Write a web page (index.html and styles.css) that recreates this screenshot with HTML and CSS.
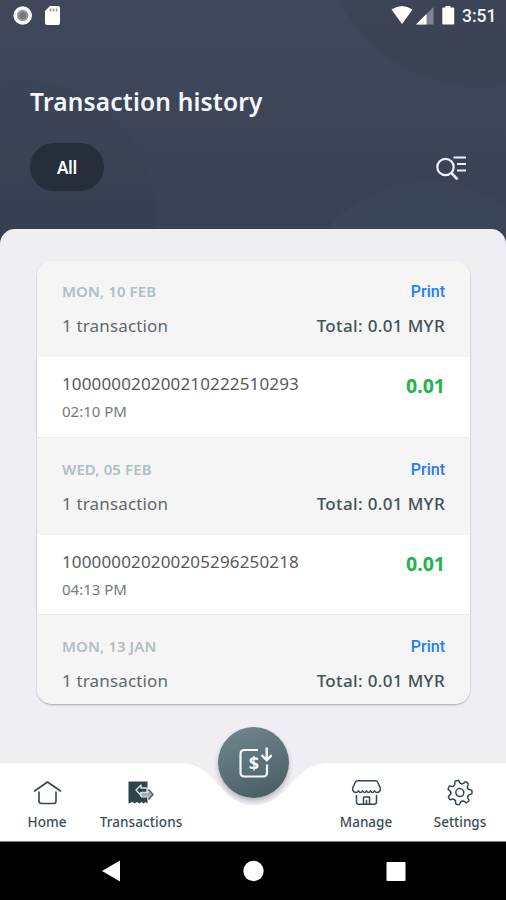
FILE: index.html
```html
<!DOCTYPE html>
<html lang="en">
<head>
    <meta charset="UTF-8">
    <meta name="viewport" content="width=device-width, initial-scale=1.0">
    <title>Transaction history</title>
    <link rel="stylesheet" href="styles.css">
</head>
<body>

    <div class="screen">
        <header class="header">
            <svg class="header-bg" viewBox="0 0 506 250">
                <circle cx="480" cy="-70" r="157" fill="#394050" opacity="0.5"/>
                <circle cx="20" cy="215" r="135" fill="#353b4b" opacity="0.2"/>
                <circle cx="428" cy="311" r="130" fill="#3e495b" opacity="0.45"/>
            </svg>

            <div class="status-bar">
                <svg width="62" height="32" viewBox="0 0 62 32">
                    <circle cx="22.7" cy="15.5" r="9.3" fill="#fff"/>
                    <circle cx="22.7" cy="15.5" r="5.8" fill="#96989f"/>
                    <circle cx="22.7" cy="15.5" r="3.5" fill="#74777f"/>
                    <path d="M50 6h8q2 0 2 2v15q0 2-2 2H47q-2 0-2-2V11z" fill="#fff"/>
                    <path d="M50.5 8.500v3M53.5 8.500v3M56.5 8.500v3" stroke="#8a8d95" stroke-width="1.5"/>
                </svg>
                <div class="status-right">
                    <svg width="68" height="32" viewBox="0 0 68 32">
                        <path d="M0.5 9.500Q11 2.500 21.500 9.500L11 24z" fill="#fff"/>
                        <path d="M42.500 7V24.500H25z" fill="#7f8490"/>
                        <path d="M35.500 14V24.500H25z" fill="#fff"/>
                        <path d="M54.500 6h5v1.500h2.500q1.200 0 1.200 1.200v14.600q0 1.200-1.200 1.200H52.500q-1.200 0-1.200-1.200V8.700q0-1.200 1.200-1.200h2z" fill="#fff"/>
                    </svg>
                    <span class="clock">3:51</span>
                </div>
            </div>

            <h1 class="title">Transaction history</h1>

            <div class="filters">
                <button class="filter">All</button>
                <svg class="search" width="32" height="26" viewBox="0 0 32 26" fill="none" stroke="#e9f1f8" stroke-width="2.200">
                    <circle cx="10.500" cy="13" r="8.200"/>
                    <path d="M16.500 19l6 6.500" stroke-width="2.600"/>
                    <path d="M18.500 3.500h12.500M22 10h9M22 16.500h9"/>
                </svg>
            </div>
        </header>

        <main class="sheet">
            <div class="card">
                <div class="day">
                    <div class="line"><span class="date">MON, 10 FEB</span><a class="print">Print</a></div>
                    <div class="line"><span class="count">1 transaction</span><span class="total">Total: 0.01 MYR</span></div>
                </div>
                <div class="transaction">
                    <div>
                        <p class="number">100000020200210222510293</p>
                        <p class="time">02:10 PM</p>
                    </div>
                    <span class="amount">0.01</span>
                </div>
                <div class="day">
                    <div class="line"><span class="date">WED, 05 FEB</span><a class="print">Print</a></div>
                    <div class="line"><span class="count">1 transaction</span><span class="total">Total: 0.01 MYR</span></div>
                </div>
                <div class="transaction">
                    <div>
                        <p class="number">100000020200205296250218</p>
                        <p class="time">04:13 PM</p>
                    </div>
                    <span class="amount">0.01</span>
                </div>
                <div class="day">
                    <div class="line"><span class="date">MON, 13 JAN</span><a class="print">Print</a></div>
                    <div class="line"><span class="count">1 transaction</span><span class="total">Total: 0.01 MYR</span></div>
                </div>
            </div>
        </main>

        <nav class="nav">
            <svg class="nav-bg" viewBox="0 0 506 78">
                <path d="M0 0H180C200 0 210 12 221 25C233 38 242 42 254 42C266 42 276 37 287 25C299 12 309 0 329 0H506V78H0z" fill="#fff"/>
            </svg>

            <a class="nav-item home">
                <svg width="30" height="28" viewBox="0 0 30 28" fill="none" stroke="#34474f" stroke-width="1.600" stroke-linecap="round" stroke-linejoin="round">
                    <path d="M2.500 12L15.500 3L28.500 12"/>
                    <path d="M7 13V22Q7 24.500 9.500 24.500H21.500Q24 24.500 24 22V13"/>
                </svg>
                <span>Home</span>
            </a>
            <a class="nav-item transactions">
                <svg width="30" height="28" viewBox="0 0 30 28">
                    <path d="M2.500 2.500H21.500V24.500l-2-1.500-2 1.500-2-1.500-2 1.500-2.500-1.500-2.500 1.500-2-1.500-4 1.500z" fill="#2f434c"/>
                    <path d="M10 11l5-5v3h6v4.500h-6v3z" fill="#2f434c" stroke="#e3eaed" stroke-width="1.300" stroke-linejoin="round"/>
                    <path d="M26.500 15.500l-4.500-5v3h-7v4.500h7v3z" fill="#a3afb4" stroke="#dbe3e6" stroke-width="1"/>
                    <path d="M22.500 10.500l4.500 5-4.500 5" fill="none" stroke="#4a5c65" stroke-width="1.400"/>
                </svg>
                <span>Transactions</span>
            </a>
            <a class="nav-item manage">
                <svg width="30" height="28" viewBox="0 0 30 28" fill="none" stroke="#34474f" stroke-width="1.500" stroke-linecap="round" stroke-linejoin="round">
                    <path d="M6.500 1.700H24.500Q26 1.700 26.600 3L29.300 9V11Q28.500 13.500 26 13.500Q24.500 13.500 23.500 11.800Q21.500 15 19.500 11.800Q17.500 15 15.500 11.800Q13.500 15 11.500 11.800Q9.500 15 7.500 11.800Q6.500 13.500 5 13.500Q2.500 13.500 1.700 11V9L4.400 3Q5 1.700 6.500 1.700z"/>
                    <path d="M5.500 16.500V23Q5.500 25.300 7.800 25.300H23.200Q25.500 25.300 25.500 23V16.500"/>
                    <path d="M12.500 25V18H18.500V25M15.500 21.500V25"/>
                </svg>
                <span>Manage</span>
            </a>
            <a class="nav-item settings">
                <svg width="30" height="28" viewBox="0 0 30 28" fill="none" stroke="#34474f" stroke-width="1.500" stroke-linecap="round" stroke-linejoin="round">
                    <g transform="translate(14.800 13.500) rotate(-15)">
                        <circle r="4"/>
                        <path id="tooth" d="M-3.900 -8.100Q-2.400 -8.600 -2.300 -10.200Q-2.200 -12.200 -1.200 -12.200H1.200Q2.200 -12.200 2.300 -10.200Q2.400 -8.600 3.900 -8.100"/>
                        <use href="#tooth" transform="rotate(51.430)"/>
                        <use href="#tooth" transform="rotate(102.860)"/>
                        <use href="#tooth" transform="rotate(154.290)"/>
                        <use href="#tooth" transform="rotate(205.710)"/>
                        <use href="#tooth" transform="rotate(257.140)"/>
                        <use href="#tooth" transform="rotate(308.570)"/>
                    </g>
                </svg>
                <span>Settings</span>
            </a>

            <a class="pay">
                <svg width="36" height="36" viewBox="0 0 36 36" fill="none" stroke="#f3f8fa" stroke-width="2.200">
                    <path d="M22 5H8.500Q4.500 5 4.500 9V27.500Q4.500 31.500 8.500 31.500H27Q31 31.500 31 27.500V19.500"/>
                    <path d="M30.700 2.500V14.500M25.500 10L30.700 15.200L35.800 10" stroke-width="2.400"/>
                    <text class="dollar" x="18" y="24.500" text-anchor="middle">$</text>
                </svg>
            </a>
        </nav>

        <footer class="system-bar">
            <svg width="506" height="58" viewBox="0 0 506 58" fill="#fff">
                <path d="M102 29L120 18.500V39.500z"/>
                <circle cx="253.500" cy="29" r="10.200"/>
                <rect x="386.500" y="20" width="19" height="19" rx="1"/>
            </svg>
        </footer>
    </div>

</body>
</html>
```
FILE: styles.css
```css
* {
    box-sizing: border-box;
}
body {
    margin: 0;
    font-family: "Noto Sans", "Open Sans", sans-serif;
    background-color: #efeef3;
}
.screen {
    width: 506px;
    height: 900px;
    display: flex;
    flex-direction: column;
    overflow: hidden;
}
.header {
    position: relative;
    height: 229px;
    flex-shrink: 0;
    background: #3d475a;
}
.header-bg {
    position: absolute;
    top: 0;
    left: 0;
    width: 506px;
    height: 250px;
    background: linear-gradient(180deg, #3e485a 0%, #3d4559 50%, #364152 100%);
}
.status-bar {
    position: relative;
    height: 32px;
    display: flex;
    justify-content: space-between;
}
.status-right {
    display: flex;
    padding-right: 9px;
}
.clock {
    width: 35px;
    margin-left: 3px;
    font: 500 17.5px/32px Roboto, sans-serif;
    color: #f4f6fa;
    white-space: nowrap;
}
.title {
    position: relative;
    margin: 53px 0 0 30px;
    font-size: 24.5px;
    line-height: 34px;
    font-weight: 600;
    letter-spacing: 0.18px;
    color: #f4f8fc;
}
.filters {
    position: relative;
    display: flex;
    justify-content: space-between;
    align-items: center;
    margin: 24px 39px 0 30px;
}
.filter {
    width: 74px;
    height: 48px;
    padding: 0;
    border: none;
    border-radius: 24px;
    background-color: #262d3b;
    color: white;
    font: 600 17px "Noto Sans", sans-serif;
    letter-spacing: -0.3px;
}
.sheet {
    position: relative;
    height: 534px;
    flex-shrink: 0;
    padding: 32px 36px 0 37px;
    border-radius: 15px 15px 0 0;
    background-color: #efeef3;
}
.card {
    height: 443px;
    border-radius: 15px;
    overflow: hidden;
    background-color: white;
    box-shadow: 0 1px 2px rgba(0, 0, 0, 0.3);
}
.day {
    height: 98px;
    padding: 19px 25px 0;
    background-color: #f5f5f5;
    border-top: 1px solid #ececed;
}
.day:first-child {
    height: 96px;
    padding-top: 17px;
    border-top-color: #f5f5f5;
}
.line {
    display: flex;
    justify-content: space-between;
    align-items: center;
    height: 24px;
}
.line + .line {
    margin-top: 10.5px;
}
.date {
    font-size: 15px;
    line-height: 22px;
    font-weight: 600;
    letter-spacing: 0.1px;
    color: #b1bec3;
}
.print {
    padding-top: 2px;
    font: 500 16px/24px Roboto, sans-serif;
    color: #267df5;
}
.count {
    font-size: 17px;
    letter-spacing: 0.15px;
    color: #62686b;
}
.total {
    font-size: 17px;
    font-weight: 500;
    letter-spacing: 0.35px;
    color: #435157;
}
.transaction {
    display: flex;
    justify-content: space-between;
    height: 79.6px;
    padding: 15px 25px 0;
}
.number {
    margin: 0;
    font-size: 17px;
    line-height: 24px;
    letter-spacing: 0.15px;
    color: #58595b;
}
.time {
    margin: 4px 0 0;
    font-size: 15px;
    line-height: 22px;
    color: #77797b;
}
.amount {
    font-size: 19.5px;
    line-height: 28px;
    font-weight: 700;
    color: #20b64a;
}
.nav {
    position: relative;
    height: 78px;
    flex-shrink: 0;
    display: grid;
    grid-template-columns: 94px 94px 130px 96px 92px;
}
.nav-bg {
    position: absolute;
    top: 0;
    left: 0;
    width: 506px;
    height: 78px;
}
.nav-item {
    position: relative;
    display: flex;
    flex-direction: column;
    align-items: center;
    padding-top: 16px;
    font-size: 13.5px;
    line-height: 18px;
    font-weight: 500;
    color: #3e4e55;
}
.nav-item span {
    margin-top: 6px;
}
.transactions span {
    letter-spacing: 0.1px;
}
.manage {
    grid-column: 4;
}
.pay {
    position: absolute;
    left: 218px;
    top: -36px;
    width: 71px;
    height: 71px;
    display: flex;
    align-items: center;
    justify-content: center;
    border-radius: 50%;
    background: linear-gradient(160deg, #738790, #455b64);
    box-shadow: 0 3px 5px rgba(50, 50, 70, 0.3);
}
.dollar {
    font: 700 18px "Noto Sans", sans-serif;
    fill: #f3f8fa;
    stroke: none;
}
.system-bar {
    height: 59px;
    flex-shrink: 0;
    background-color: black;
    border-top: 1px solid #777;
}
```
